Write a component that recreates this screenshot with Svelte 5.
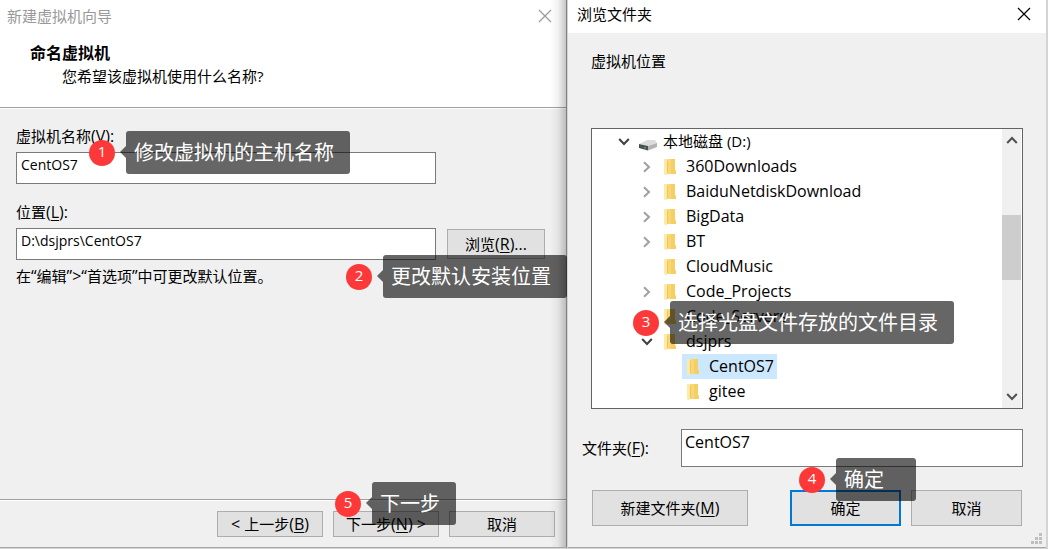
<script>
  let vmName = $state('CentOS7');
  let vmPath = $state('D:\\dsjprs\\CentOS7');
  let folder = $state('CentOS7');

  const rows = [
    { name: '360Downloads', level: 1, state: 'closed' },
    { name: 'BaiduNetdiskDownload', level: 1, state: 'closed' },
    { name: 'BigData', level: 1, state: 'closed' },
    { name: 'BT', level: 1, state: 'closed' },
    { name: 'CloudMusic', level: 1, state: 'leaf' },
    { name: 'Code_Projects', level: 1, state: 'closed' },
    { name: 'Code_Servers', level: 1, state: 'leaf' },
    { name: 'dsjprs', level: 1, state: 'open' },
    { name: 'CentOS7', level: 2, state: 'leaf', selected: true },
    { name: 'gitee', level: 2, state: 'leaf' }
  ];
</script>

{#snippet callout(number, text, place)}
  <div class="callout {place}">
    <span class="badge">{number}</span>
    <span class="tip">{text}</span>
  </div>
{/snippet}

{#snippet cross()}
  <svg width="14" height="14" viewBox="0 0 14 14" aria-hidden="true">
    <path d="M1 1 13 13M13 1 1 13" fill="none" stroke="currentColor" stroke-width="1.2" />
  </svg>
{/snippet}

{#snippet chevron(dir)}
  <svg class="chevron {dir}" width="12" height="12" viewBox="0 0 12 12" aria-hidden="true">
    <path d="M3 1.2 8 6 3 10.8" fill="none" stroke="currentColor" stroke-width="2" />
  </svg>
{/snippet}

{#snippet folderIcon()}
  <svg width="13" height="18" viewBox="0 0 13 18" aria-hidden="true">
    <path d="M3 1H12V12L13 13V16H3Z" fill="#f8d775" />
    <path d="M8 1H12V12L13 13V16H8Z" fill="#f5cf63" />
    <path d="M1 1H4L5 3V15L3 17.5 1 16Z" fill="#ffe9a6" />
    <path d="M4 2 5 3V15L4 16Z" fill="#eec65c" />
  </svg>
{/snippet}

<main>
  <section class="window wizard" aria-label="新建虚拟机向导">
    <header>
      <div class="titlebar">
        <span>新建虚拟机向导</span>
        <button class="close" aria-label="关闭">{@render cross()}</button>
      </div>
      <h1>命名虚拟机</h1>
      <p>您希望该虚拟机使用什么名称?</p>
    </header>
    <div class="fields">
      <div class="field">
        <label for="vm-name">虚拟机名称<span class="key">(<u>V</u>):</span></label>
        <input id="vm-name" bind:value={vmName} />
        {@render callout(1, '修改虚拟机的主机名称', 'at-name')}
      </div>
      <div class="field">
        <label for="vm-path">位置<span class="key">(<u>L</u>):</span></label>
        <div class="path">
          <input id="vm-path" bind:value={vmPath} />
          <button class="btn browse">浏览<span class="key">(<u>R</u>)...</span></button>
        </div>
        {@render callout(2, '更改默认安装位置', 'at-path')}
      </div>
      <p class="hint">在<span class="key">“</span>编辑<span class="key">”&gt;“</span>首选项<span class="key">”</span>中可更改默认位置。</p>
    </div>
    <footer>
      <button class="btn"><span class="key">{'< '}</span>上一步<span class="key">(<u>B</u>)</span></button>
      <div class="anchor">
        <button class="btn">下一步<span class="key">(<u>N</u>) &gt;</span></button>
        {@render callout(5, '下一步', 'at-next')}
      </div>
      <button class="btn">取消</button>
    </footer>
  </section>

  <section class="window browser" aria-label="浏览文件夹">
    <div class="titlebar">
      <span>浏览文件夹</span>
      <button class="close" aria-label="关闭">{@render cross()}</button>
    </div>
    <div class="content">
      <p class="caption">虚拟机位置</p>
      <div class="tree">
        <ul>
          <li class="level0">
            <button class="expander open" aria-label="折叠">{@render chevron('down')}</button>
            <svg class="drive" width="18" height="12" viewBox="0 0 18 12" aria-hidden="true">
              <path d="M0 5 8 1H16L18 4 9 7Z" fill="#dcdcde" />
              <path d="M9 7 18 4V8L9 11.5Z" fill="#b3b3b6" />
              <path d="M0 5 9 7V11.5L0 9Z" fill="#4d5050" />
              <path d="M5 8H7V9.5H5Z" fill="#43a457" />
            </svg>
            <button class="node">本地磁盘 (D:)</button>
          </li>
          {#each rows as row}
            <li class="level{row.level}">
              {#if row.state === 'leaf'}
                <span class="expander"></span>
              {:else if row.state === 'open'}
                <button class="expander open" aria-label="折叠">{@render chevron('down')}</button>
              {:else}
                <button class="expander" aria-label="展开">{@render chevron('right')}</button>
              {/if}
              <button class="node" class:selected={row.selected}>
                {@render folderIcon()}
                <span class="name">{row.name}</span>
              </button>
            </li>
          {/each}
        </ul>
        <div class="scroll">
          {@render chevron('up')}
          <span class="thumb"></span>
          {@render chevron('down')}
        </div>
        {@render callout(3, '选择光盘文件存放的文件目录', 'at-tree')}
      </div>
      <div class="folder">
        <label for="folder">文件夹<span class="key">(<u>F</u>):</span></label>
        <input id="folder" bind:value={folder} />
      </div>
      <div class="actions">
        <button class="btn wide">新建文件夹<span class="key">(<u>M</u>)</span></button>
        <div class="anchor">
          <button class="btn primary">确定</button>
          {@render callout(4, '确定', 'at-ok')}
        </div>
        <button class="btn">取消</button>
      </div>
    </div>
    <svg class="grip" width="12" height="12" viewBox="0 0 12 12" aria-hidden="true">
      <path d="M8 0h3v3H8zM4 4h3v3H4zM8 4h3v3H8zM0 8h3v3H0zM4 8h3v3H4zM8 8h3v3H8z" fill="#bfbfbf" />
    </svg>
  </section>
</main>

<style>
  :global(body) {
    margin: 0;
  }
  main {
    display: grid;
    grid-template-columns: minmax(0, 567fr) minmax(0, 481fr);
    min-height: 100vh;
    box-sizing: border-box;
    padding-bottom: 1px;
    background: #d4d4d4;
    font: 15px/20px 'Open Sans', 'Noto Sans CJK SC', sans-serif;
    color: #000;
  }
  h1,
  p,
  ul {
    margin: 0;
    padding: 0;
  }
  button,
  input {
    box-sizing: border-box;
    font: inherit;
    color: inherit;
    border-radius: 0;
  }
  button {
    padding: 0;
    border: 0;
    background: none;
    white-space: nowrap;
  }
  label {
    white-space: nowrap;
  }
  u {
    text-underline-offset: 2px;
  }
  .key {
    font-size: 16px;
    line-height: 16px;
    white-space: pre;
  }
  svg {
    display: block;
    flex: none;
  }
  .window {
    position: relative;
    display: flex;
    flex-direction: column;
    background: #f0f0f0;
    border-bottom: 1px solid #a8a8a8;
  }
  .titlebar {
    display: flex;
    align-items: center;
    justify-content: space-between;
  }
  .wizard {
    border-right: 1px solid #808080;
  }
  .wizard::after {
    content: '';
    position: absolute;
    inset: 0 0 0 auto;
    width: 16px;
    background: linear-gradient(to right, transparent, rgba(0, 0, 0, 0.05) 50%, rgba(0, 0, 0, 0.22));
    pointer-events: none;
  }
  header {
    height: 107px;
    background: #fff;
    border-bottom: 1px solid #a0a0a0;
    box-shadow: 0 1px #fff;
  }
  .wizard .titlebar {
    height: 32px;
    padding: 0 14px 0 7px;
    color: #999;
  }
  h1 {
    padding: 11px 0 0 30px;
    font-size: 16px;
    line-height: 20px;
    font-weight: 700;
  }
  header p {
    padding: 3px 0 0 62px;
  }
  .fields {
    flex: 1;
    padding: 18px 21px 0 16px;
  }
  .field {
    position: relative;
    margin-bottom: 18px;
  }
  .field label {
    display: block;
    height: 20px;
    margin-bottom: 6px;
  }
  input {
    display: block;
    height: 32px;
    padding: 0 4px 8px;
    border: 1px solid #7a7a7a;
    background: #fff;
    outline: 0;
  }
  .field input {
    width: calc(100% - 109px);
    font-size: 14px;
  }
  .path {
    display: flex;
    justify-content: space-between;
  }
  .btn {
    width: 106px;
    height: 26px;
    background: #e1e1e1;
    border: 1px solid #adadad;
  }
  .path .browse {
    width: 98px;
    height: 30px;
    margin-top: 1px;
  }
  .hint {
    margin-top: -12px;
  }
  footer {
    display: flex;
    justify-content: flex-end;
    gap: 10px;
    padding: 11px 11px 10px;
    border-top: 1px solid #a0a0a0;
    box-shadow: inset 0 1px #fff;
  }
  .anchor {
    position: relative;
  }
  .browser {
    margin-left: 1px;
    margin-right: 2px;
  }
  .browser .titlebar {
    height: 33px;
    padding: 0 15px 5px 9px;
    box-sizing: border-box;
    background: #fff;
  }
  .content {
    padding: 18px 23px 20px;
  }
  .caption {
    height: 77px;
  }
  .tree {
    position: relative;
    display: flex;
    justify-content: space-between;
    height: 279px;
    border: 1px solid #646464;
    background: #fff;
  }
  ul {
    list-style: none;
  }
  li {
    display: flex;
    align-items: center;
    height: 25px;
  }
  .level0 {
    padding-left: 24px;
  }
  .level1 {
    padding-left: 47px;
  }
  .level2 {
    padding-left: 70px;
  }
  .expander {
    display: flex;
    align-items: center;
    justify-content: center;
    width: 16px;
    height: 16px;
    color: #a0a0a0;
  }
  .expander.open {
    color: #404040;
  }
  .down {
    transform: rotate(90deg);
  }
  .up {
    transform: rotate(-90deg);
  }
  .drive {
    margin: 6px 6px 0 7px;
  }
  .node {
    display: flex;
    align-items: center;
    gap: 10px;
    height: 25px;
    padding-bottom: 2px;
  }
  .level1 .node,
  .level2 .node {
    padding: 0 3px 0 4px;
    margin-left: 4px;
  }
  .name {
    padding-bottom: 2px;
    font-size: 16px;
  }
  .selected {
    background: #cce8ff;
  }
  .scroll {
    display: flex;
    flex-direction: column;
    align-items: center;
    width: 19px;
    padding: 5px 0;
    margin-right: 1px;
    background: #f0f0f0;
    color: #505050;
  }
  .thumb {
    width: 100%;
    height: 65px;
    margin: 69px 0 auto;
    background: #cdcdcd;
  }
  .folder {
    display: flex;
    align-items: center;
    justify-content: space-between;
    margin: 20px 0 23px -9px;
  }
  .folder input {
    width: 342px;
    height: 38px;
    padding: 0 3px 12px;
    font-size: 16px;
  }
  .actions {
    display: flex;
    gap: 10px;
    padding: 0 1px;
  }
  .actions .btn {
    width: 111px;
    height: 36px;
  }
  .actions .wide {
    width: 156px;
    margin-right: auto;
  }
  .actions .primary {
    border: 2px solid #0078d7;
  }
  .grip {
    position: absolute;
    right: 3px;
    bottom: 2px;
  }
  .callout {
    position: absolute;
    z-index: 2;
    display: flex;
    align-items: center;
    gap: 11px;
  }
  .badge {
    width: 26px;
    height: 26px;
    border-radius: 50%;
    background: #fc3838;
    color: #fff;
    font-size: 15px;
    line-height: 22px;
    text-align: center;
  }
  .tip {
    position: relative;
    box-sizing: border-box;
    min-width: 80px;
    height: 43px;
    padding: 0 16px 0 8px;
    border-radius: 3px;
    background: rgba(0, 0, 0, 0.6);
    color: #fff;
    font-size: 20px;
    line-height: 44px;
    white-space: nowrap;
  }
  .tip::before {
    content: '';
    position: absolute;
    right: 100%;
    top: 15px;
    border: 6px solid transparent;
    border-left: 0;
    border-right-color: rgba(0, 0, 0, 0.6);
  }
  .at-name {
    left: 73px;
    top: 5px;
  }
  .at-path {
    left: 330px;
    top: 53px;
  }
  .at-next {
    left: 2px;
    top: -29px;
  }
  .at-tree {
    left: 41px;
    top: 172px;
  }
  .at-ok {
    left: 9px;
    top: -32px;
  }
</style>
